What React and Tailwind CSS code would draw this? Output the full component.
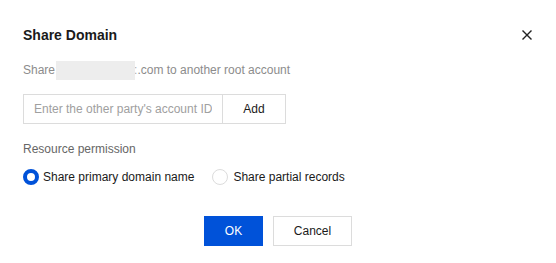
import React from "react";

export default function App() {
  return (
    <div className="w-[556px] h-[263px] bg-white flex flex-col pl-[23px] pr-[24px] pt-[25px] font-['Liberation_Sans',Arial,sans-serif]">
      <div className="flex items-center justify-between h-[20px]">
        <div className="text-[14px] leading-[20px] font-bold text-[#1a1a1a]">Share Domain</div>
        <svg width="10" height="10" viewBox="0 0 10 10" className="text-[#222]">
          <path d="M1 1L9 9M9 1L1 9" stroke="currentColor" strokeWidth="1.4" strokeLinecap="square" />
        </svg>
      </div>

      <div className="mt-[15px] flex items-center h-[20px] text-[12px] leading-[20px] text-[#8c8c8c]">
        <span>Share</span>
        <span className="inline-block ml-[1px] w-[79px] h-[19px] bg-[#ededed] blur-[0.5px]"></span>
        <span className="text-[#b0b0b0] -ml-[1px]">:</span>
        <span>.com to another root account</span>
      </div>

      <div className="mt-[14px] flex h-[30px] w-[263px]">
        <div className="w-[199px] h-[30px] border border-[#dcdcdc] border-r-0 flex items-center pl-[10px] pr-[10px]">
          <div className="min-w-0 overflow-hidden whitespace-nowrap text-[12px] text-[#a0a0a0]">Enter the other party's account ID</div>
        </div>
        <div className="w-[64px] h-[30px] border border-[#dcdcdc] flex items-center justify-center text-[12px] text-[#1a1a1a]">
          Add
        </div>
      </div>

      <div className="mt-[15px] text-[12px] leading-[20px] text-[#666]">Resource permission</div>

      <div className="mt-[8px] flex items-center h-[20px] text-[12px] text-[#1a1a1a]">
        <div className="flex items-center">
          <span className="w-[16px] h-[16px] rounded-full border-[4.5px] border-[#0052d9] bg-white"></span>
          <span className="ml-[4px]">Share primary domain name</span>
        </div>
        <div className="flex items-center ml-[18px]">
          <span className="w-[16px] h-[16px] rounded-full border border-[#dcdcdc] bg-white"></span>
          <span className="ml-[5px]">Share partial records</span>
        </div>
      </div>

      <div className="mt-[29px] flex justify-center gap-[10px] pl-[1px]">
        <button className="w-[59px] h-[30px] bg-[#0052d9] text-white text-[12px]">OK</button>
        <button className="w-[79px] h-[30px] border border-[#dcdcdc] bg-white text-[#1a1a1a] text-[12px]">Cancel</button>
      </div>
    </div>
  );
}
